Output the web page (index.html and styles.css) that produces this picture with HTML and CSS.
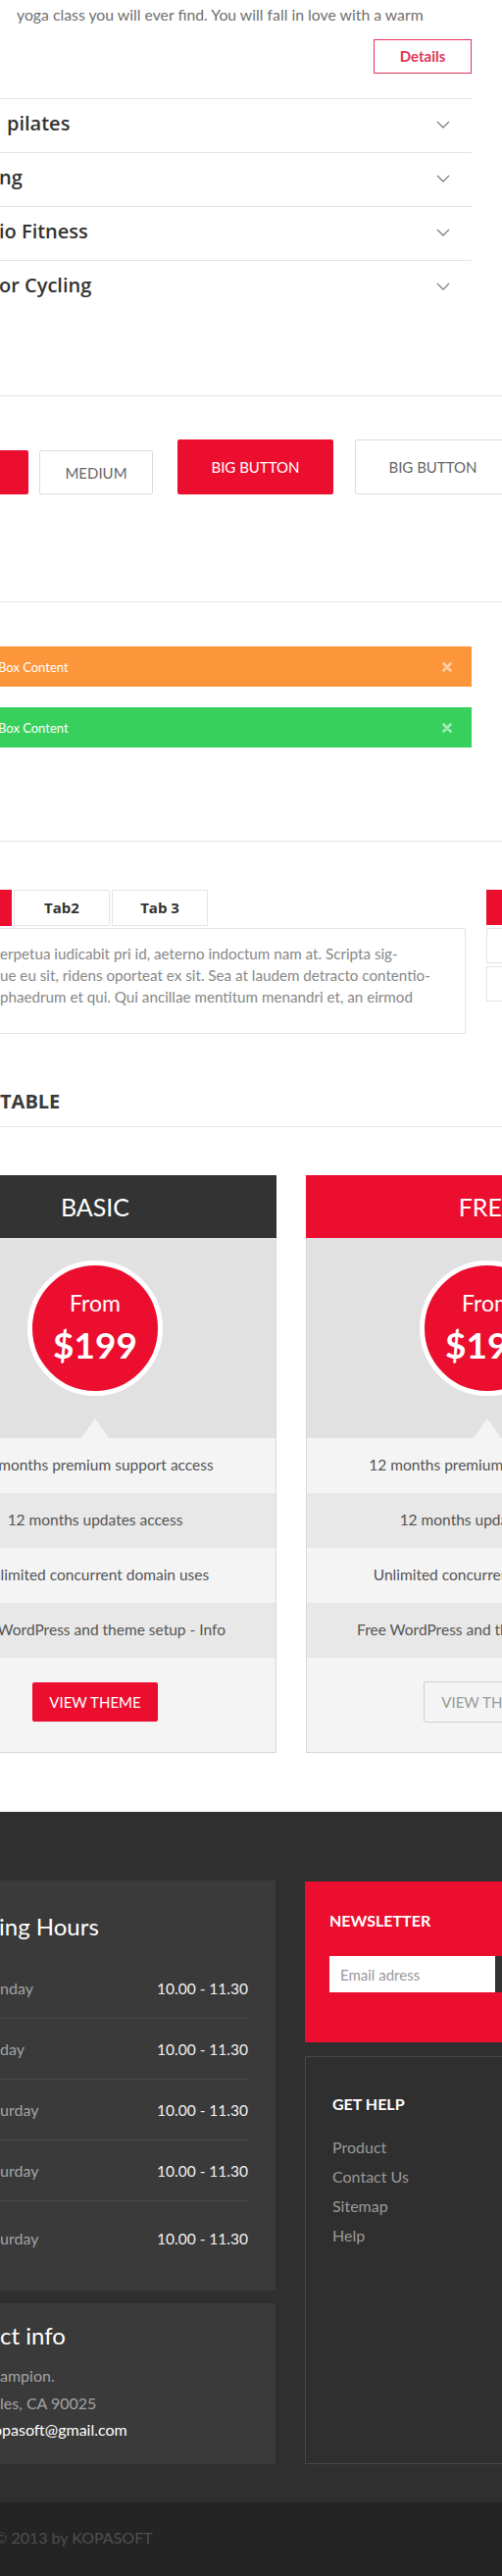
FILE: index.html
```html
<!DOCTYPE html>
<html lang="en">
<head>
<meta charset="utf-8">
<title>Kopasoft UI elements</title>
<link rel="stylesheet" href="styles.css">
</head>
<body>
<div class="page">
  <section class="intro">
    <p class="lead">yoga class you will ever find. You will fall in love with a warm</p>
    <div class="actions"><a class="btn-details" href="#">Details</a></div>
    <ul class="accordion">
      <li class="acc-item"><span class="acc-title acc-title--first">pilates</span><svg class="acc-icon" viewBox="0 0 14 8"><polyline points="1,1 7,7 13,1"/></svg></li>
      <li class="acc-item"><span class="acc-title">ng</span><svg class="acc-icon" viewBox="0 0 14 8"><polyline points="1,1 7,7 13,1"/></svg></li>
      <li class="acc-item"><span class="acc-title">io Fitness</span><svg class="acc-icon" viewBox="0 0 14 8"><polyline points="1,1 7,7 13,1"/></svg></li>
      <li class="acc-item"><span class="acc-title">or Cycling</span><svg class="acc-icon" viewBox="0 0 14 8"><polyline points="1,1 7,7 13,1"/></svg></li>
    </ul>
  </section>

  <hr class="rule rule--intro">

  <section class="btn-row">
    <a class="btn btn--solid btn--md" href="#" aria-label="Medium"></a>
    <a class="btn btn--ghost btn--md btn--after-md" href="#">Medium</a>
    <a class="btn btn--solid btn--lg btn--after-ghost" href="#">Big button</a>
    <a class="btn btn--ghost btn--lg btn--after-lg" href="#">Big button</a>
  </section>

  <hr class="rule rule--buttons">

  <section class="alerts">
    <div class="alert alert--orange"><span>Box Content</span><svg class="alert-close" viewBox="0 0 10 10"><path d="M1.5 1.5L8.5 8.5M8.5 1.5L1.5 8.5"/></svg></div>
    <div class="alert alert--green"><span>Box Content</span><svg class="alert-close" viewBox="0 0 10 10"><path d="M1.5 1.5L8.5 8.5M8.5 1.5L1.5 8.5"/></svg></div>
  </section>

  <hr class="rule rule--alerts">

  <section class="tabs-row">
    <div class="tabs">
      <div class="tab-nav">
        <span class="tab tab--active" aria-label="Tab 1"></span>
        <span class="tab">Tab2</span>
        <span class="tab">Tab 3</span>
      </div>
      <div class="tab-panel">
        <p>erpetua iudicabit pri id, aeterno indoctum nam at. Scripta sig-<br>ue eu sit, ridens oporteat ex sit. Sea at laudem detracto contentio-<br>phaedrum et qui. Qui ancillae mentitum menandri et, an eirmod</p>
      </div>
    </div>
    <div class="vtabs">
      <span class="vtab vtab--active"></span>
      <span class="vtab"></span>
      <span class="vtab"></span>
    </div>
  </section>

  <h2 class="section-title">TABLE</h2>
  <hr class="rule rule--title">

  <section class="pricing">
    <div class="plan">
      <div class="plan-head plan-head--dark">BASIC</div>
      <div class="plan-body">
        <div class="plan-top">
          <div class="price-circle"><span class="price-from">From</span><span class="price-val">$199</span></div>
        </div>
        <ul class="features">
          <li>12 months premium support access</li>
          <li>12 months updates access</li>
          <li>Unlimited concurrent domain uses</li>
          <li>Free WordPress and theme setup - Info</li>
        </ul>
        <div class="plan-foot"><a class="btn-view" href="#">View theme</a></div>
      </div>
    </div>
    <div class="plan">
      <div class="plan-head plan-head--red">FREE</div>
      <div class="plan-body">
        <div class="plan-top">
          <div class="price-circle"><span class="price-from">From</span><span class="price-val">$199</span></div>
        </div>
        <ul class="features">
          <li>12 months premium support access</li>
          <li>12 months updates access</li>
          <li>Unlimited concurrent domain uses</li>
          <li>Free WordPress and theme setup - Info</li>
        </ul>
        <div class="plan-foot"><a class="btn-view btn-view--ghost" href="#">View theme</a></div>
      </div>
    </div>
  </section>

  <footer class="footer">
    <div class="footer-grid">
      <div class="footer-col">
        <div class="hours">
          <h3 class="box-title box-title--hours">ing Hours</h3>
          <ul>
            <li class="hours-row"><span class="day">nday</span><span class="time">10.00 - 11.30</span></li>
            <li class="hours-row"><span class="day">day</span><span class="time">10.00 - 11.30</span></li>
            <li class="hours-row"><span class="day">urday</span><span class="time">10.00 - 11.30</span></li>
            <li class="hours-row"><span class="day">urday</span><span class="time">10.00 - 11.30</span></li>
            <li class="hours-row"><span class="day">urday</span><span class="time">10.00 - 11.30</span></li>
          </ul>
        </div>
        <div class="contact">
          <h3 class="box-title">ct info</h3>
          <p class="contact-line">ampion.</p>
          <p class="contact-line">les, CA 90025</p>
          <p class="contact-line contact-line--email">opasoft@gmail.com</p>
        </div>
      </div>
      <div class="footer-col footer-col--right">
        <div class="newsletter">
          <h3 class="small-title">Newsletter</h3>
          <form class="nl-form">
            <input class="nl-input" type="text" placeholder="Email adress">
            <button class="nl-btn" type="button" aria-label="Subscribe"></button>
          </form>
        </div>
        <div class="help">
          <h3 class="small-title">Get help</h3>
          <ul class="help-links">
            <li>Product</li>
            <li>Contact Us</li>
            <li>Sitemap</li>
            <li>Help</li>
          </ul>
        </div>
      </div>
    </div>
  </footer>
  <div class="copyright">© 2013 by KOPASOFT</div>
</div>
</body>
</html>
```

FILE: styles.css
```css
* { box-sizing: border-box; margin: 0; padding: 0; }
html, body { overflow: hidden; background: #fff; }
body { width: 512px; font-family: "Lato", "Open Sans", sans-serif; color: #777; }
ul { list-style: none; }
a { text-decoration: none; color: inherit; }

.page { width: 1170px; margin-left: -88px; }

/* intro + accordion */
.lead { padding-left: 105px; font-size: 15.8px; line-height: 29px; color: #707070; white-space: nowrap; }
.actions { width: 569px; margin-top: 11px; display: flex; justify-content: flex-end; }
.btn-details { display: block; width: 100px; height: 35px; border: 1px solid #e23459; color: #e23459; font-size: 15px; font-weight: 700; line-height: 33px; text-align: center; }
.accordion { width: 569px; margin-top: 25px; }
.acc-item { height: 55px; border-top: 1px solid #e4e4e4; display: flex; justify-content: space-between; align-items: flex-start; padding-right: 22px; }
.acc-title { padding-left: 87px; font-family: "Open Sans", sans-serif; font-weight: 600; font-size: 20px; line-height: 50px; color: #333; white-space: nowrap; }
.acc-title--first { padding-left: 95px; }
.acc-icon { width: 14px; height: 8px; margin-top: 22px; fill: none; stroke: #858585; stroke-width: 1.4; }

.rule { border: 0; border-top: 1px solid #e6e6e6; height: 0; }
.rule--intro { margin-top: 83px; }
.rule--buttons { margin-top: 109px; }
.rule--alerts { margin-top: 95px; }
.rule--title { margin-top: 10px; }

/* buttons */
.btn-row { display: flex; align-items: flex-end; margin-top: 44px; }
.btn { display: flex; align-items: center; justify-content: center; font-size: 15px; text-transform: uppercase; border-radius: 2px; white-space: nowrap; }
.btn--solid { background: #ec0e2f; color: #fff; }
.btn--ghost { border: 1px solid #dcdcdc; color: #666; }
.btn--md { width: 117px; height: 45px; }
.btn--after-md { width: 116px; margin-left: 11px; }
.btn--lg { width: 159px; height: 56px; }
.btn--after-ghost { margin-left: 25px; }
.btn--after-lg { margin-left: 22px; }

/* alerts */
.alerts { margin-top: 45px; width: 569px; }
.alert { height: 41px; display: flex; align-items: center; justify-content: space-between; padding: 0 20px 0 86px; font-size: 13px; color: #fff; }
.alert + .alert { margin-top: 21px; }
.alert--orange { background: #fd963a; }
.alert--green { background: #38d05c; }
.alert-close { width: 10px; height: 10px; fill: none; stroke: rgba(255,255,255,0.55); stroke-width: 2.6; stroke-linecap: round; }

/* tabs */
.tabs-row { display: flex; margin-top: 49px; }
.tabs { width: 563px; }
.tab-nav { display: flex; gap: 2px; padding-left: 2px; }
.tab { width: 98px; height: 37px; border: 1px solid #e3e3e3; font-family: "Open Sans", sans-serif; font-weight: 700; font-size: 15px; line-height: 35px; text-align: center; color: #333; }
.tab--active { background: #ec0e2f; border-color: #ec0e2f; color: #fff; }
.tab-panel { margin-top: 2px; height: 108px; border: 1px solid #e3e3e3; padding: 14px 0 0 87px; font-size: 15.2px; line-height: 22px; color: #888; white-space: nowrap; }
.vtabs { margin-left: 21px; width: 300px; display: flex; flex-direction: column; gap: 3px; }
.vtab { height: 36px; border: 1px solid #e3e3e3; }
.vtab--active { background: #ec0e2f; border-color: #ec0e2f; }

.section-title { margin-top: 54px; padding-left: 88px; font-family: "Open Sans", sans-serif; font-weight: 700; font-size: 20px; line-height: 30px; color: #3a3a3a; }

/* pricing */
.pricing { display: flex; gap: 30px; margin-top: 49px; }
.plan { width: 370px; }
.plan-head { height: 64px; line-height: 64px; text-align: center; font-size: 25px; color: #fff; }
.plan-head--dark { background: #333; }
.plan-head--red { background: #ec0e2f; }
.plan-body { border: 1px solid #d8d8d8; border-top: 0; }
.plan-top { position: relative; height: 204px; padding-top: 23px; background: #e1e1e1; }
.plan-top::after { content: ""; position: absolute; left: 50%; bottom: 0; margin-left: -14px; border-left: 14px solid transparent; border-right: 14px solid transparent; border-bottom: 20px solid #f4f4f4; }
.price-circle { width: 138px; height: 138px; margin: 0 auto; border-radius: 50%; border: 5px solid #fff; background: #ec0e2f; padding-top: 24px; text-align: center; color: #fff; }
.price-from { display: block; font-size: 23px; line-height: 28px; }
.price-val { display: block; margin-top: 9px; font-size: 37px; font-weight: 700; line-height: 40px; }
.features li { height: 56px; line-height: 54px; text-align: center; font-size: 15.5px; color: #555; background: #f4f4f4; white-space: nowrap; }
.features li:nth-child(even) { background: #e8e8e8; }
.plan-foot { height: 96px; padding-top: 25px; background: #f4f4f4; display: flex; justify-content: center; align-items: flex-start; }
.btn-view { display: block; width: 128px; height: 40px; line-height: 40px; text-align: center; font-size: 15px; text-transform: uppercase; border-radius: 2px; background: #ec0e2f; color: #fff; }
.btn-view--ghost { width: 130px; height: 42px; margin-top: -1px; background: transparent; border: 1px solid #cfcfcf; color: #999; }

/* footer */
.footer { margin-top: 60px; background: #2f2f2f; padding: 70px 0 39px; }
.footer-grid { display: grid; grid-template-columns: 369px 369px; column-gap: 30px; }
.footer-col { display: flex; flex-direction: column; }
.footer-col--right { padding-top: 1px; }
.hours { background: #3a3a3a; padding: 32px 28px 23px 30px; }
.box-title { font-size: 24px; font-weight: 400; line-height: 30px; color: #fff; white-space: nowrap; }
.box-title--hours { padding-left: 57px; margin-bottom: 17px; }
.hours-row { display: flex; justify-content: space-between; padding: 19px 0 18px 58px; line-height: 24px; border-bottom: 1px solid #4a4a4a; }
.hours-row:last-child { border-bottom: 0; padding-top: 26px; }
.day { font-size: 16px; color: #a3a3a3; }
.time { font-size: 15.5px; color: #f2f2f2; }
.contact { margin-top: 13px; background: #3a3a3a; padding: 18px 0 21.5px 88px; }
.contact .box-title { margin-bottom: 12px; }
.contact-line { font-size: 16px; line-height: 27.5px; color: #a3a3a3; white-space: nowrap; }
.contact-line--email { color: #fff; margin-left: -7px; }
.newsletter { height: 164px; background: #ec0e2f; padding: 30px 0 0 25px; }
.small-title { font-size: 16px; font-weight: 700; line-height: 20px; color: #fff; text-transform: uppercase; }
.nl-form { display: flex; margin-top: 26px; }
.nl-input { width: 169px; height: 37px; border: 0; outline: 0; background: #fff; padding-left: 11px; font-family: "Lato", sans-serif; font-size: 15px; color: #999; }
.nl-input::placeholder { color: #999; }
.nl-btn { width: 60px; height: 37px; border: 0; background: #333; }
.help { margin-top: 14px; height: 416px; border: 1px solid #474747; padding: 38px 0 0 27px; }
.help-links { margin-top: 19px; }
.help-links li { font-size: 16px; line-height: 30px; color: #999; }

.copyright { height: 75px; background: #242424; padding: 0 0 3px 82px; font-size: 16px; line-height: 72px; color: #4e4e4e; white-space: nowrap; }
```
